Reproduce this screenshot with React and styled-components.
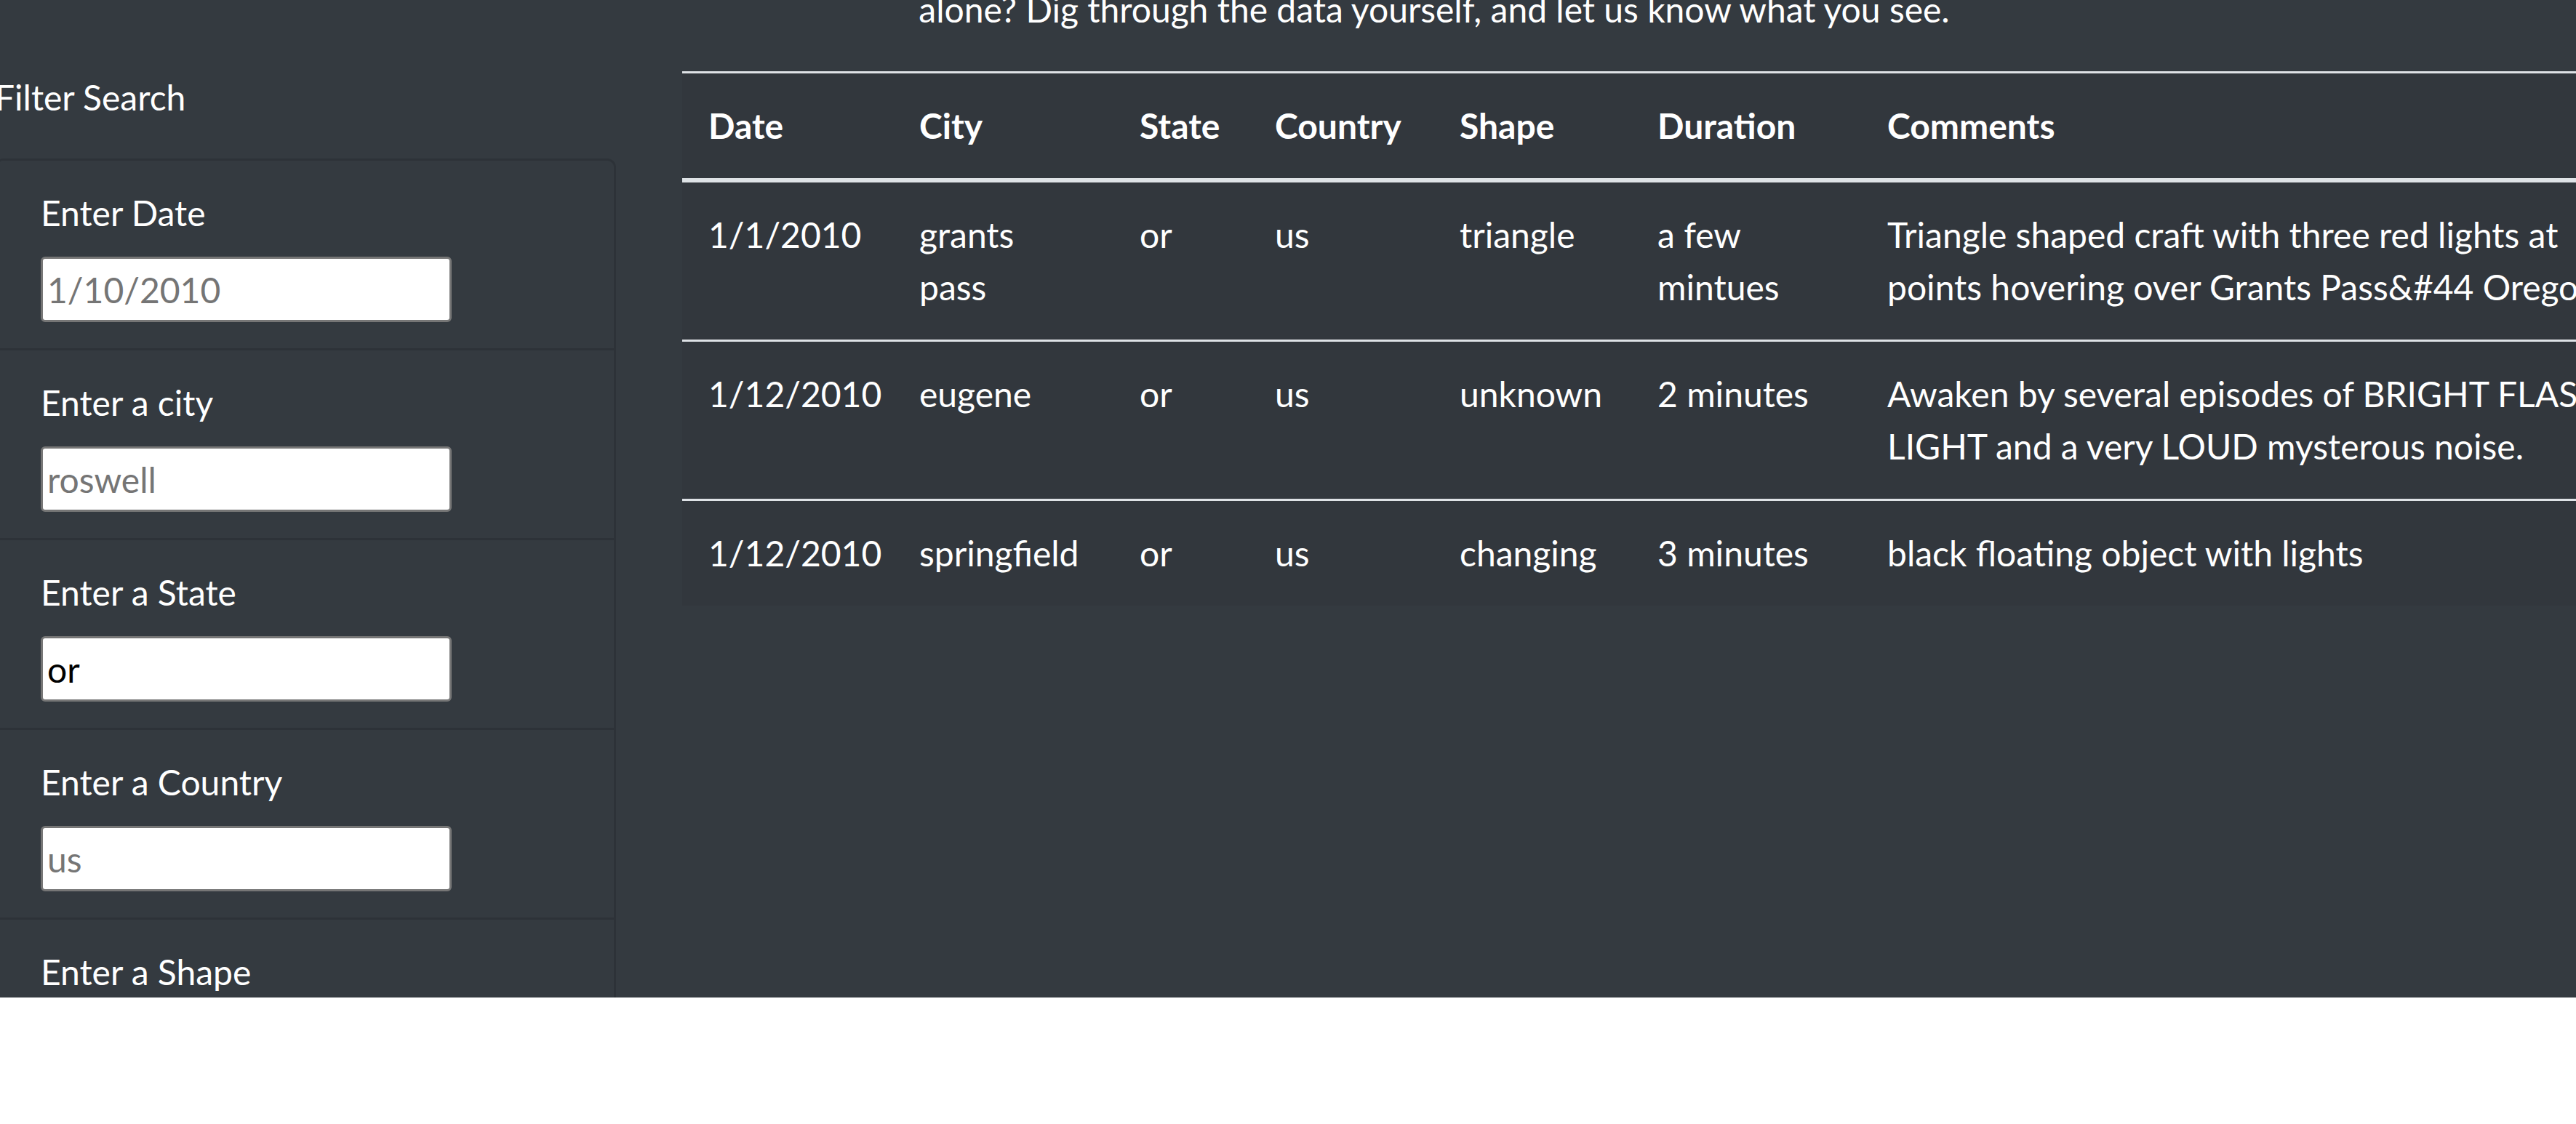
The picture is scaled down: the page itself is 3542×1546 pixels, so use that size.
import React from 'react';
import styled, { createGlobalStyle } from 'styled-components';

const GlobalStyle = createGlobalStyle`
  html, body {
    margin: 0;
    padding: 0;
    background: #fff;
  }
`;

const filters = [
  { id: 'datetime', label: 'Enter Date', placeholder: '1/10/2010' },
  { id: 'city', label: 'Enter a city', placeholder: 'roswell' },
  { id: 'state', label: 'Enter a State', placeholder: 'ca', value: 'or' },
  { id: 'country', label: 'Enter a Country', placeholder: 'us' },
  { id: 'shape', label: 'Enter a Shape', placeholder: 'circle' },
];

const columns = [
  { key: 'datetime', title: 'Date', width: 290 },
  { key: 'city', title: 'City', width: 303 },
  { key: 'state', title: 'State', width: 186 },
  { key: 'country', title: 'Country', width: 254 },
  { key: 'shape', title: 'Shape', width: 272 },
  { key: 'duration', title: 'Duration', width: 316 },
  { key: 'comments', title: 'Comments', width: 1250 },
];

const tableWidth = columns.reduce((sum, c) => sum + c.width, 0);

const sightings = [
  {
    datetime: '1/1/2010',
    city: 'grants pass',
    state: 'or',
    country: 'us',
    shape: 'triangle',
    duration: 'a few mintues',
    comments: 'Triangle shaped craft with three red lights at\npoints hovering over Grants Pass&#44 Oregon',
  },
  {
    datetime: '1/12/2010',
    city: 'eugene',
    state: 'or',
    country: 'us',
    shape: 'unknown',
    duration: '2 minutes',
    comments: 'Awaken by several episodes of BRIGHT FLASHING\nLIGHT and a very LOUD mysterous noise.',
  },
  {
    datetime: '1/12/2010',
    city: 'springfield',
    state: 'or',
    country: 'us',
    shape: 'changing',
    duration: '3 minutes',
    comments: 'black floating object with lights',
  },
];

function App() {
  return (
    <Page>
      <GlobalStyle />
      <Row>
        <Sidebar>
          <SideTitle>Filter Search</SideTitle>
          <FilterList>
            {filters.map((f) => (
              <FilterItem key={f.id}>
                <FilterLabel htmlFor={f.id}>{f.label}</FilterLabel>
                <FilterInput
                  id={f.id}
                  type="text"
                  placeholder={f.placeholder}
                  defaultValue={f.value}
                />
              </FilterItem>
            ))}
          </FilterList>
        </Sidebar>
        <Main>
          <Intro>alone? Dig through the data yourself, and let us know what you see.</Intro>
          <Table $w={tableWidth}>
            <thead>
              <tr>
                {columns.map((c) => (
                  <HeadCell key={c.key} $w={c.width}>{c.title}</HeadCell>
                ))}
              </tr>
            </thead>
            <tbody>
              {sightings.map((s, i) => (
                // eslint-disable-next-line react/no-array-index-key
                <BodyRow key={i}>
                  {columns.map((c) => (
                    <Cell key={c.key} $wrapLines={c.key === 'comments'}>{s[c.key]}</Cell>
                  ))}
                </BodyRow>
              ))}
            </tbody>
          </Table>
        </Main>
      </Row>
    </Page>
  );
}

const Page = styled('div')`
  height: 1372px;
  overflow: hidden;
  background: #343a40;
  color: #fff;
  font-family: Lato, "Open Sans", sans-serif;
  font-size: 48px;
  line-height: 72px;
`;

const Row = styled('div')`
  display: flex;
  align-items: flex-start;
  margin: -23px 0 0 -7px;
`;

const Sidebar = styled('aside')`
  flex: none;
  width: 854px;
  padding-top: 121px;
`;

const SideTitle = styled('h5')`
  margin: 0 0 48px;
  font-size: 48px;
  font-weight: 400;
  line-height: 72px;
`;

const FilterList = styled('ul')`
  list-style: none;
  margin: 0;
  padding: 0;
  border: 3px solid rgba(0, 0, 0, 0.125);
  border-radius: 12px;
`;

const FilterItem = styled('li')`
  padding: 36px 60px;
  & + & {
    border-top: 3px solid rgba(0, 0, 0, 0.125);
  }
`;

const FilterLabel = styled('label')`
  display: block;
  margin-bottom: 24px;
`;

const FilterInput = styled('input')`
  display: block;
  box-sizing: border-box;
  width: 565px;
  height: 90px;
  padding: 0 6px;
  border: 3px solid #767676;
  border-radius: 6px;
  background: #fff;
  color: #000;
  font: inherit;
  line-height: normal;
  outline: none;
  &::placeholder {
    color: #757575;
  }
`;

const Main = styled('main')`
  flex: none;
  width: 2068px;
  margin-left: 91px;
`;

const Intro = styled('p')`
  margin: 0 0 49px;
  text-align: center;
`;

const Table = styled('table')`
  border-collapse: separate;
  border-spacing: 0;
  table-layout: fixed;
  width: ${(p) => p.$w}px;
  background: #32373d;
  color: #fff;
`;

const HeadCell = styled('th')`
  box-sizing: border-box;
  width: ${(p) => p.$w}px;
  padding: 36px;
  text-align: left;
  vertical-align: bottom;
  font-weight: 700;
  border-top: 3px solid #dee2e6;
  border-bottom: 6px solid #dee2e6;
`;

const BodyRow = styled('tr')`
  & + & > td {
    border-top: 3px solid #dee2e6;
  }
`;

const Cell = styled('td')`
  padding: 36px;
  vertical-align: top;
  white-space: ${(p) => (p.$wrapLines ? 'pre-line' : 'normal')};
`;

export default App;
